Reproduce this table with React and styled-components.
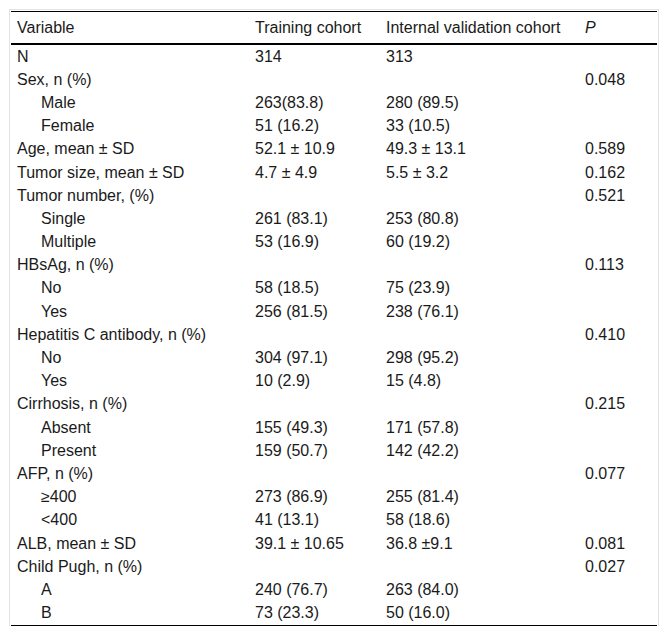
import React from 'react';
import styled, { createGlobalStyle } from 'styled-components';

const GlobalStyle = createGlobalStyle`
  body {
    margin: 0;
    background: #fff;
    font-family: 'Liberation Sans', Arial, sans-serif;
    color: #1a1a1a;
  }
`;

const Frame = styled.div`
  margin: 9px 10px 0 9px;
  border: 1px solid #e3e3e3;
  border-bottom: none;
  padding: 1px 1px 0;
`;

const Table = styled.table`
  width: 100%;
  border-collapse: collapse;
  table-layout: fixed;
  font-size: 16px;
  border-top: 1px solid #000;
  border-bottom: 1px solid #000;
`;

const HeadCell = styled.th`
  text-align: left;
  font-weight: normal;
  padding: 0 6px;
  height: 31px;
  border-bottom: 2px solid #000;
  white-space: nowrap;
  font-style: ${(p) => (p.$italic ? 'italic' : 'normal')};
`;

const Cell = styled.td`
  padding: 0 6px 0 ${(p) => (p.$indent ? '30px' : '6px')};
  height: 23.2px;
  line-height: 18px;
  white-space: nowrap;
`;

const rows = [
  ['N', '314', '313', ''],
  ['Sex, n (%)', '', '', '0.048'],
  ['Male', '263(83.8)', '280 (89.5)', '', true],
  ['Female', '51 (16.2)', '33 (10.5)', '', true],
  ['Age, mean ± SD', '52.1 ± 10.9', '49.3 ± 13.1', '0.589'],
  ['Tumor size, mean ± SD', '4.7 ± 4.9', '5.5 ± 3.2', '0.162'],
  ['Tumor number, (%)', '', '', '0.521'],
  ['Single', '261 (83.1)', '253 (80.8)', '', true],
  ['Multiple', '53 (16.9)', '60 (19.2)', '', true],
  ['HBsAg, n (%)', '', '', '0.113'],
  ['No', '58 (18.5)', '75 (23.9)', '', true],
  ['Yes', '256 (81.5)', '238 (76.1)', '', true],
  ['Hepatitis C antibody, n (%)', '', '', '0.410'],
  ['No', '304 (97.1)', '298 (95.2)', '', true],
  ['Yes', '10 (2.9)', '15 (4.8)', '', true],
  ['Cirrhosis, n (%)', '', '', '0.215'],
  ['Absent', '155 (49.3)', '171 (57.8)', '', true],
  ['Present', '159 (50.7)', '142 (42.2)', '', true],
  ['AFP, n (%)', '', '', '0.077'],
  ['≥400', '273 (86.9)', '255 (81.4)', '', true],
  ['<400', '41 (13.1)', '58 (18.6)', '', true],
  ['ALB, mean ± SD', '39.1 ± 10.65', '36.8 ±9.1', '0.081'],
  ['Child Pugh, n (%)', '', '', '0.027'],
  ['A', '240 (76.7)', '263 (84.0)', '', true],
  ['B', '73 (23.3)', '50 (16.0)', '', true],
];

export default function App() {
  return (
    <>
      <GlobalStyle />
      <Frame>
        <Table>
          <colgroup>
            <col style={{ width: 238 }} />
            <col style={{ width: 131 }} />
            <col style={{ width: 199 }} />
            <col />
          </colgroup>
          <thead>
            <tr>
              <HeadCell>Variable</HeadCell>
              <HeadCell>Training cohort</HeadCell>
              <HeadCell>Internal validation cohort</HeadCell>
              <HeadCell $italic>P</HeadCell>
            </tr>
          </thead>
          <tbody>
            {rows.map(([label, train, internal, p, sub], i) => (
              <tr key={i}>
                <Cell $indent={sub}>{label}</Cell>
                <Cell>{train}</Cell>
                <Cell>{internal}</Cell>
                <Cell>{p}</Cell>
              </tr>
            ))}
          </tbody>
        </Table>
      </Frame>
    </>
  );
}
